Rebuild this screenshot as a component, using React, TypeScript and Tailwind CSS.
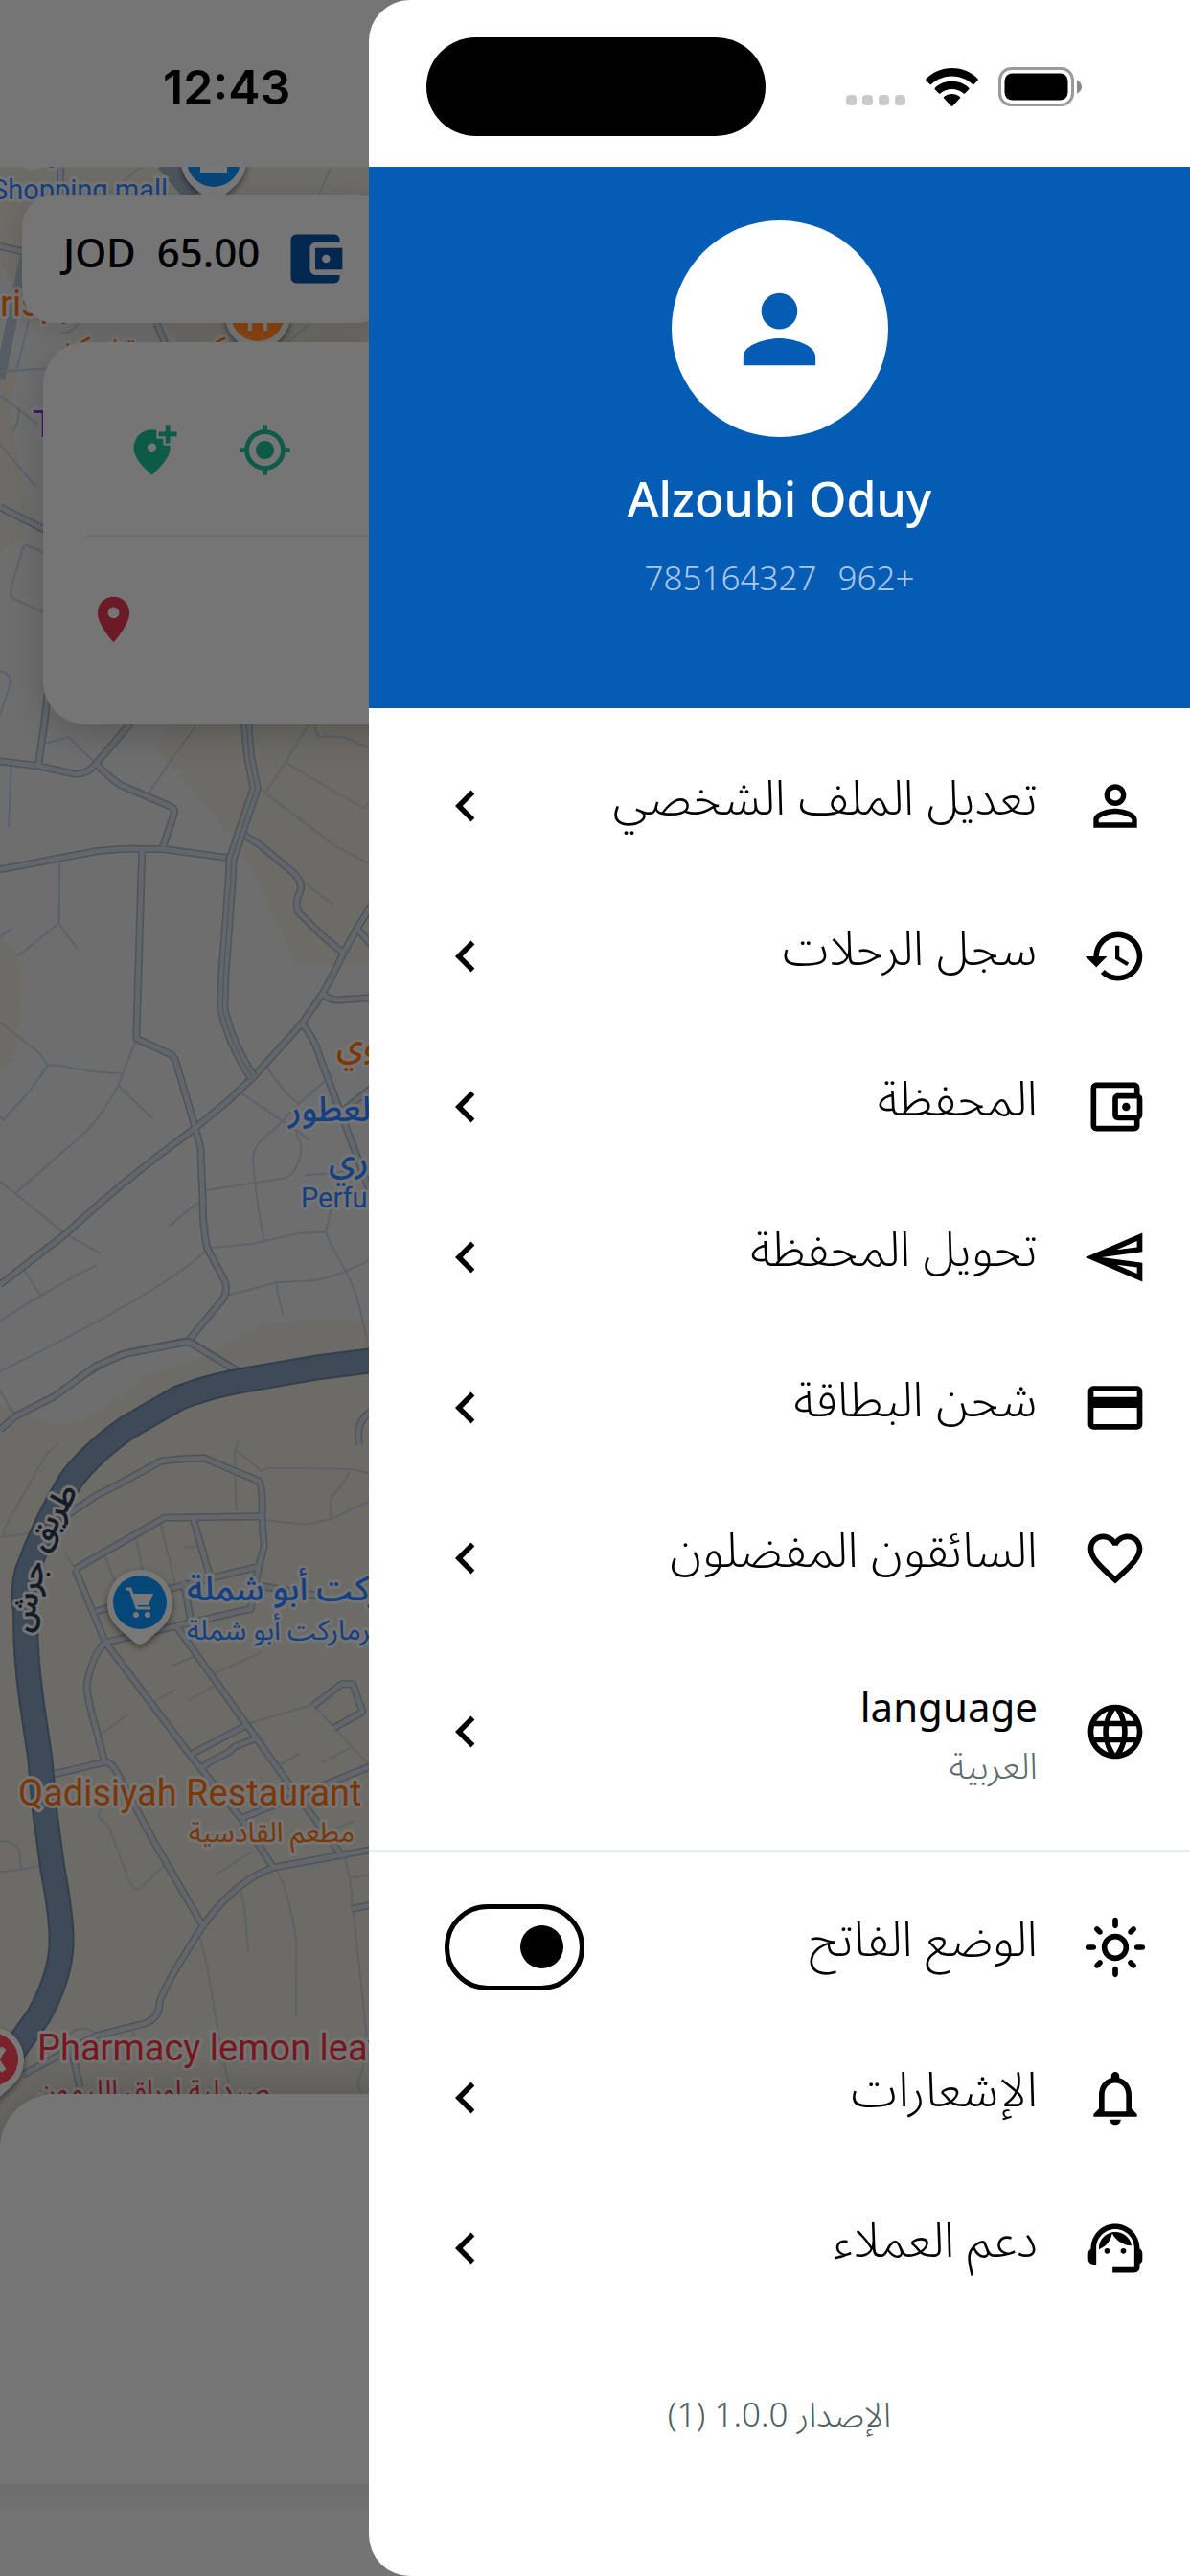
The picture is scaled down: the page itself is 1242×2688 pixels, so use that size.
import React, { useState } from "react";
import type { IconType } from "react-icons";
import {
  MdAccountBalanceWallet,
  MdAddLocationAlt,
  MdChevronLeft,
  MdCreditCard,
  MdFavoriteBorder,
  MdHistory,
  MdLanguage,
  MdLocationOn,
  MdMyLocation,
  MdNotificationsNone,
  MdOutlineAccountBalanceWallet,
  MdOutlineLightMode,
  MdOutlineSend,
  MdPerson,
  MdPersonOutline,
  MdSupportAgent,
} from "react-icons/md";

/* ---------- Map ---------- */

type Tile = { transform: string; major: string[]; minor: string[] };

const tiles: Tile[] = [
  {
    transform: "scale(0.33333 0.48469)",
    major: [
      "M0 530L75 542",
      "M0 1092L140 1140",
      "M150 1490L135 1580",
      "M490 695L520 745",
      "M190 360L187 420",
    ],
    minor: [
      "M0 800L150 793",
      "M50 800L75 735L90 690",
      "M0 850L117 913",
      "M60 880Q60 910 40 927",
      "M0 955L112 1048",
      "M140 1190L85 1175Q75 1170 70 1185L35 1265Q30 1280 40 1288L135 1318",
      "M0 1445Q30 1445 33 1470L0 1540",
      "M1035 360L1000 418",
      "M900 738L970 697",
      "M190 718Q230 715 245 697",
      "M330 420L440 360",
    ],
  },
  {
    transform: "translate(0 740) scale(0.33333 0.44643)",
    major: [
      "M0 122L115 132L235 152Q275 152 300 128L410 32",
      "M145 0L120 132",
      "M300 128Q350 165 380 178L535 228Q552 235 543 250L510 322",
      "M0 375L265 337Q350 325 445 327L510 327L720 348",
      "M445 327L427 770L535 807Q548 815 555 835L610 975L628 1025L635 1150Q635 1220 650 1262L703 1335Q715 1355 700 1377L590 1476L385 1507Q310 1530 240 1568",
      "M0 1345L205 1227Q360 1120 520 1030L610 980L715 915L800 855L945 735L1010 665L1050 610L1075 570L1120 510L1170 450",
      "M765 295L810 315L915 380Q945 400 942 420L932 440Q925 460 935 475L1010 530L1075 570",
      "M945 735Q985 770 1000 810L1160 1130",
      "M1010 665Q1030 680 1060 680L1170 674",
      "M590 1476L755 1552",
      "M1120 515L1170 556",
      "M1080 935L1170 882",
    ],
    minor: [
      "M135 82L215 65L300 128",
      "M465 198L530 125L612 40",
      "M835 192L893 125L965 37",
      "M820 190L1050 320L1170 367",
      "M893 125L1140 232L1170 205",
      "M985 37Q990 60 1000 65Q1060 60 1090 70L1170 94",
      "M35 132L27 275",
      "M187 355L185 500L55 578",
      "M185 500Q190 510 243 560",
      "M0 533L38 512",
      "M0 732L125 805L150 833Q180 830 215 837Q290 850 385 851",
      "M150 833L85 900L10 960L0 952",
      "M427 770L370 880Q310 960 262 993L50 1130",
      "M370 880L478 957",
      "M0 1103L205 1227L315 1272",
      "M0 1430L80 1392L245 1320L303 1300",
      "M75 1310L128 1372",
      "M0 1548L110 1507L245 1455Q560 1330 650 1262",
      "M835 835Q890 900 935 922L1020 868",
      "M755 897L970 1007",
      "M935 922L855 985Q795 1015 792 1050Q800 1140 827 1243",
      "M925 990Q950 1020 940 1045Q920 1095 885 1097L640 1125",
      "M530 1210Q570 1180 628 1150",
      "M650 1260L790 1250L935 1225L1020 1222L1035 1175",
      "M1020 1222Q1030 1245 1080 1310Q1120 1360 1150 1480",
      "M715 1370L865 1340L990 1335Q1080 1320 1170 1282",
      "M865 1340Q870 1375 887 1415",
      "M955 1090L1080 1080L1035 1175",
      "M945 400L1042 457",
    ],
  },
  {
    transform: "translate(0 1400) scale(0.33333 0.5102)",
    major: [
      "M0 180L50 152L170 112L300 50L390 25L590 0L755 65",
      "M210 355L300 315Q380 290 500 245Q560 238 640 238L810 285Q825 300 820 355L827 420L810 460L640 487L535 505L300 552",
      "M235 465L515 360L820 357",
      "M235 465L330 615Q290 640 272 700Q272 730 300 790L328 860L165 885",
      "M330 615L760 550L785 547L810 460",
      "M605 362L655 475",
      "M575 490L600 580",
      "M330 615L595 845L755 975L855 1075",
      "M550 580L905 905L1075 1055",
      "M595 845L770 785",
      "M630 872L655 860L715 840L735 828L800 812",
      "M328 860Q350 860 365 880L480 1020L635 1195",
      "M635 1195Q740 1100 860 1075L1170 1038",
      "M635 1195Q520 1310 500 1350Q500 1385 450 1395L300 1420L70 1500",
      "M755 975L1170 866",
      "M980 745L1070 700L1105 700L1135 757L1045 790",
      "M1100 1160L1170 1151",
      "M225 1450L250 1525",
      "M820 500L1000 520",
      "M1170 140Q1110 160 1125 210",
    ],
    minor: [
      "M182 208L145 230L50 340Q10 380 10 400",
      "M0 400L110 390",
      "M0 100L45 150",
      "M748 200L735 225L740 350",
      "M740 222L820 265Q830 258 845 258L1095 260L1170 272",
      "M1095 262Q1080 290 1035 320V362",
      "M830 365L960 374L1040 362L1170 322",
      "M425 400L450 480",
      "M502 370L550 500",
      "M330 440L358 490",
      "M575 418Q600 424 622 418",
      "M540 662L625 640",
      "M590 733L670 705",
      "M668 680L820 635",
      "M485 735L547 712",
      "M318 802L400 762",
      "M785 780L980 742L1170 876",
      "M875 865L940 842",
      "M1005 862L1100 830",
      "M205 433L235 465",
      "M0 1022Q50 1020 62 1045Q60 1080 80 1078L143 1070",
      "M0 1085L80 1078",
      "M320 955Q300 965 315 978L340 990L405 1105Q420 1125 440 1118L515 1070",
      "M755 1120Q770 1170 777 1250",
      "M860 1075Q900 1110 928 1225L927 1378",
      "M672 1092L790 1042",
      "M960 1020L1110 980",
      "M625 1215L650 1280L690 1440L725 1540",
      "M1080 1055L1095 1095L1170 1560",
      "M1095 1098L1170 1088",
      "M210 1420Q260 1390 310 1420",
      "M1160 1430L1120 1520L1130 1535",
      "M415 1410L430 1450",
    ],
  },
];

const highway =
  "M1170 38L1000 52L770 78Q660 90 560 115L400 175Q280 230 220 285Q140 370 85 470Q70 500 80 560Q78 640 100 740L125 850L140 960L165 1080Q200 1200 190 1250Q180 1310 120 1380L0 1490";
const dual =
  "M770 20L780 110L800 185L725 350L722 400L700 620L697 700Q720 780 790 860";

function Roads({ tile }: { tile: Tile }) {
  return (
    <g transform={tile.transform} fill="none" strokeLinejoin="round">
      {tile.minor.map((d) => (
        <path key={d} d={d} stroke="#5c6268" strokeWidth="2" vectorEffect="non-scaling-stroke" />
      ))}
      {tile.major.map((d) => (
        <path key={d} d={d} stroke="#505359" strokeWidth="8" vectorEffect="non-scaling-stroke" />
      ))}
      {tile.major.map((d) => (
        <path key={d} d={d} stroke="#61676b" strokeWidth="5" vectorEffect="non-scaling-stroke" />
      ))}
    </g>
  );
}

function Pin({ x, y, color, children }: { x: number; y: number; color: string; children?: React.ReactNode }) {
  return (
    <g transform={`translate(${x} ${y})`}>
      <path
        d="M0 44C-4 44 -8 40 -12 36C-24 26 -34 18 -34 0A34 34 0 0 1 34 0C34 18 24 26 12 36C8 40 4 44 0 44Z"
        fill="#787878"
        className="drop-shadow-[0_3px_3px_rgba(0,0,0,0.45)]"
      />
      <circle r="28" fill={color} />
      {children}
    </g>
  );
}

function MapView() {
  return (
    <svg
      viewBox="0 174 1242 2514"
      preserveAspectRatio="xMinYMin slice"
      className="absolute inset-0 h-full w-full"
      aria-label="Map"
    >
      <rect y="174" width="1242" height="2514" fill="#6e6e6e" />
      <g fill="#6d6b65">
        <g transform="scale(0.33333 0.48469)">
          <path d="M0 360H3726V740H560L500 690H70L60 640L0 560Z" />
          <path d="M0 780L50 800L30 880L70 1050L95 1100L60 1160L0 1190Z" />
        </g>
        <g transform="translate(0 740) scale(0.33333 0.44643)">
          <path d="M550 20L490 90Q540 130 730 300Q830 420 925 598H1170V20Z" />
          <path d="M0 530L40 560L70 620L50 800L0 855Z" />
          <path d="M420 1568L650 1510L830 1435L1170 1425V1568Z" />
        </g>
        <g transform="translate(0 1400) scale(0.33333 0.5102)">
          <path d="M0 130L70 140L150 168Q210 175 300 145Q450 65 640 38L740 0H3726V2600H0Z" />
        </g>
      </g>
      <path d="M0 395L26 268" stroke="#565d64" strokeWidth="11" fill="none" />
      <path d="M172 170L202 205" stroke="#4b535c" strokeWidth="18" fill="none" />
      {tiles.map((tile) => (
        <Roads key={tile.transform} tile={tile} />
      ))}
      <g transform="translate(0 740) scale(0.33333 0.44643)" fill="none">
        <path d={dual} stroke="#505359" strokeWidth="12" vectorEffect="non-scaling-stroke" />
        <path d={dual} stroke="#61676b" strokeWidth="9" vectorEffect="non-scaling-stroke" />
        <path d={dual} stroke="#505359" strokeWidth="1" vectorEffect="non-scaling-stroke" />
      </g>
      <g transform="translate(0 1400) scale(0.33333 0.5102)" fill="none">
        <path d={highway} stroke="#323f4e" strokeWidth="27" vectorEffect="non-scaling-stroke" />
        <path d={highway} stroke="#3f4a58" strokeWidth="23" vectorEffect="non-scaling-stroke" />
      </g>

      <g
        stroke="#747474"
        strokeWidth="6"
        strokeLinejoin="round"
        paintOrder="stroke"
        className="font-[Roboto,'Noto_Sans_Arabic','DejaVu_Sans',sans-serif]"
      >
        <g fill="#143f80">
          <text x="22" y="167" fontSize="36">سوق</text>
          <text x="-9" y="208" fontSize="29">Shopping mall</text>
          <text x="301" y="1170" fontSize="36" fontWeight="500">العطور</text>
          <text x="343" y="1223" fontSize="36" fontWeight="500">ري</text>
          <text x="314" y="1260" fontSize="29">Perfumes</text>
          <text x="195" y="1670" fontSize="36" fontWeight="500">سوبرماركت أبو شملة</text>
          <text x="195" y="1711" fontSize="29">سوبرماركت أبو شملة</text>
        </g>
        <g fill="#7b3706">
          <text x="0" y="330" fontSize="38">rispy</text>
          <text x="61" y="372" fontSize="29">كريسبي تشيكن</text>
          <text x="351" y="1103" fontSize="36" fontWeight="500">وي</text>
          <text x="19" y="1884" fontSize="38">Qadisiyah Restaurant</text>
          <text x="197" y="1922" fontSize="29">مطعم القادسية</text>
        </g>
        <g fill="#77181f">
          <text x="39" y="2150" fontSize="38">Pharmacy lemon leaves</text>
          <text x="39" y="2191" fontSize="29">صيدلية اوراق الليمون</text>
        </g>
        <text x="34" y="456" fontSize="38" fill="#3c1d6b">T</text>
        <g fill="#151c28" textAnchor="middle" fontSize="32" fontWeight="600">
          <text transform="translate(64 1588) rotate(-60)">طريق</text>
          <text transform="translate(40 1668) rotate(-78)">جرش</text>
        </g>
      </g>

      <Pin x={223} y={167} color="#04467a">
        <path d="M-14 13V3H14V13Z" fill="#787878" />
      </Pin>
      <Pin x={269} y={328} color="#8a4512">
        <path d="M-8 17V0M8 17V0" stroke="#787878" strokeWidth="4" />
      </Pin>
      <Pin x={146} y={1672} color="#044879">
        <path d="M-15 -14h5l7 20h14" fill="none" stroke="#787878" strokeWidth="3" />
        <path d="M-9 -9h23l-5 12h-14z" fill="#787878" />
        <circle cx="-4" cy="13" r="3" fill="#787878" />
        <circle cx="8" cy="13" r="3" fill="#787878" />
      </Pin>
      <Pin x={-9} y={2149} color="#7a2229">
        <path d="M-3 -12L13 12M13 -12L-3 12" stroke="#787878" strokeWidth="6" />
      </Pin>
    </svg>
  );
}

/* ---------- Ride screen behind the drawer ---------- */

function RideScreen() {
  return (
    <div dir="ltr" className="flex min-h-screen flex-col bg-[#747474]">
      <header className="flex h-[174px] items-center bg-[#757575] pt-[8px] pl-[170px]">
        <time className="font-[Inter,sans-serif] text-[50px] leading-[60px] font-semibold text-black">12:43</time>
      </header>
      <main className="relative flex flex-1 flex-col overflow-hidden">
        <MapView />
        <div className="relative mt-[29px] ml-[23px] flex h-[134px] w-[384px] items-center gap-[24px] rounded-[34px] bg-[#757575] pl-[43px] shadow-[0_6px_24px_rgba(0,0,0,0.12)]">
          <span className="flex gap-[22px] pb-[14px] font-['Noto_Sans',sans-serif] text-[42px] leading-[60px] font-medium text-black">
            <span>JOD</span>
            <span>65.00</span>
          </span>
          <MdAccountBalanceWallet className="size-[68px] text-[#03274f]" />
        </div>
        <section className="relative mt-[20px] mr-[45px] ml-[45px] flex h-[399px] flex-col rounded-[45px] bg-[#757575] px-[45px] shadow-[0_10px_36px_rgba(0,0,0,0.2)]">
          <div className="flex h-[203px] items-center gap-[61px] border-b-2 border-[#6b6b6b] pt-[24px] pl-[40px]">
            <button type="button" aria-label="Add stop">
              <MdAddLocationAlt className="size-[57px] text-[#0d5a49]" />
            </button>
            <button type="button" aria-label="My location">
              <MdMyLocation className="size-[57px] text-[#0d5a49]" />
            </button>
          </div>
          <div className="flex flex-1 items-center pb-[24px]">
            <MdLocationOn className="size-[57px] text-[#6a1b27]" />
          </div>
        </section>
        <section className="relative mt-auto h-[407px] rounded-t-[57px] bg-[#757575] shadow-[0_0_48px_rgba(0,0,0,0.25)]" />
      </main>
      <footer className="relative h-24 bg-gradient-to-b from-[#6d6d6d] to-[#747474] to-40%" />
    </div>
  );
}

/* ---------- Drawer ---------- */

function StatusIcons() {
  return (
    <div className="flex items-center">
      <div className="flex gap-[6px] self-end pb-px">
        {[0, 1, 2, 3].map((n) => (
          <span key={n} className="size-[11px] rounded-[4px] bg-[#cacaca]" />
        ))}
      </div>
      <svg viewBox="0 0 55 40" className="ml-[21px] h-[40px] w-[55px]" aria-label="Wi-Fi">
        <path d="M27.500 0C38 0 47.500 4 54.500 11.200Q55.300 12 54.500 12.800L50.500 17Q49.800 17.600 49 17C43 11.500 35.500 8.600 27.500 8.600S12 11.500 6 17Q5.200 17.600 4.500 17L.5 12.800Q-.3 12 .5 11.200C7.500 4 17 0 27.500 0Z" />
        <path d="M27.500 13.800C34.300 13.800 40.500 16.400 45.200 20.700Q46 21.500 45.200 22.300L41.100 26.500Q40.400 27.200 39.600 26.500C36.300 23.700 32.100 22 27.500 22S18.700 23.700 15.400 26.500Q14.600 27.200 13.900 26.500L9.800 22.300Q9 21.500 9.800 20.700C14.500 16.400 20.700 13.800 27.500 13.800Z" />
        <path d="M27.500 27C30.700 27 33.600 28.100 35.800 29.900Q36.700 30.700 35.900 31.600L28.400 39.400Q27.500 40.200 26.600 39.400L19.100 31.600Q18.300 30.700 19.200 29.900C21.400 28.100 24.300 27 27.500 27Z" />
      </svg>
      <svg viewBox="0 0 88 41" className="ml-[21px] h-[41px] w-[88px]" aria-label="Battery">
        <rect x="1.500" y="1.500" width="76" height="38" rx="12" fill="none" stroke="#9a9a9a" strokeWidth="3" />
        <rect x="6.500" y="6.500" width="66" height="28" rx="8" />
        <path d="M82 13.500V27.500Q87 25 87 20.500T82 13.500Z" fill="#8a8a8a" />
      </svg>
    </div>
  );
}

function MenuItem({ icon: Icon, label, flip }: { icon: IconType; label: string; flip?: boolean }) {
  return (
    <li>
      <button type="button" className="flex h-[157px] w-full items-center gap-[47px] pr-[44px] pl-[68px] text-right">
        <Icon className={`size-[68px] shrink-0 text-black ${flip ? "-scale-x-100" : ""}`} />
        <span className="flex-1 pb-[20px] text-[50px] leading-[60px] font-light text-black">{label}</span>
        <MdChevronLeft className="size-[66px] shrink-0 text-black" />
      </button>
    </li>
  );
}

function LanguageItem() {
  return (
    <li>
      <button type="button" className="flex h-[206px] w-full items-center gap-[47px] pr-[44px] pl-[68px] text-right">
        <MdLanguage className="size-[68px] shrink-0 text-black" />
        <span className="flex flex-1 flex-col pt-[8px]">
          <span className="text-[42px] leading-[60px] text-black">language</span>
          <span className="text-[38px] leading-[60px] font-light text-[#5d6b6e]">العربية</span>
        </span>
        <MdChevronLeft className="size-[66px] shrink-0 text-black" />
      </button>
    </li>
  );
}

function LightModeItem() {
  const [dark, setDark] = useState(false);
  return (
    <li>
      <label className="flex h-[157px] items-center gap-[47px] pr-[44px] pl-[79px]">
        <MdOutlineLightMode className="size-[68px] shrink-0 text-black" />
        <span className="flex-1 pb-[20px] text-[50px] leading-[60px] font-light text-black">الوضع الفاتح</span>
        <input
          type="checkbox"
          role="switch"
          checked={dark}
          onChange={(e) => setDark(e.target.checked)}
          className="flex h-[90px] w-[146px] shrink-0 appearance-none items-center rounded-full border-[5px] border-black px-[17px] before:size-[45px] before:rounded-full before:bg-black checked:justify-end"
        />
      </label>
    </li>
  );
}

function Drawer() {
  return (
    <aside
      dir="rtl"
      className="absolute inset-y-0 right-0 flex w-[69%] flex-col overflow-hidden rounded-l-[43px] bg-white font-['Noto_Sans','Noto_Sans_Arabic','DejaVu_Sans',sans-serif]"
    >
      <div dir="ltr" className="flex h-[174px] shrink-0 items-center justify-between pt-[7px] pr-[112px] pl-[60px]">
        <div className="h-[103px] w-[354px] rounded-full bg-black" />
        <StatusIcons />
      </div>
      <header className="flex h-[565px] shrink-0 flex-col items-center bg-[#055cb5] pt-[56px]">
        <div className="flex size-[226px] items-center justify-center rounded-full bg-white">
          <MdPerson className="size-[113px] text-[#055cb5]" />
        </div>
        <h1 className="mt-[28px] text-[50px] leading-[72px] font-medium text-white">Alzoubi Oduy</h1>
        <p dir="ltr" className="mt-[22px] flex gap-[22px] text-[35px] leading-[50px] font-light text-[#a9c8e8]">
          <span>785164327</span>
          <span>962+</span>
        </p>
      </header>
      <nav>
        <ul className="pt-[23px]">
          <MenuItem icon={MdPersonOutline} label="تعديل الملف الشخصي" />
          <MenuItem icon={MdHistory} label="سجل الرحلات" />
          <MenuItem icon={MdOutlineAccountBalanceWallet} label="المحفظة" />
          <MenuItem icon={MdOutlineSend} label="تحويل المحفظة" flip />
          <MenuItem icon={MdCreditCard} label="شحن البطاقة" />
          <MenuItem icon={MdFavoriteBorder} label="السائقون المفضلون" />
          <LanguageItem />
        </ul>
        <hr className="my-[20px] border-t-[3px] border-[#ebefef]" />
        <ul>
          <LightModeItem />
          <MenuItem icon={MdNotificationsNone} label="الإشعارات" />
          <MenuItem icon={MdSupportAgent} label="دعم العملاء" />
        </ul>
      </nav>
      <p className="mt-[70px] text-center text-[35px] leading-[50px] font-light text-[#4d5d60]">الإصدار 1.0.0 (1)</p>
    </aside>
  );
}

export default function App() {
  return (
    <div className="relative min-h-screen overflow-hidden">
      <RideScreen />
      <Drawer />
    </div>
  );
}
